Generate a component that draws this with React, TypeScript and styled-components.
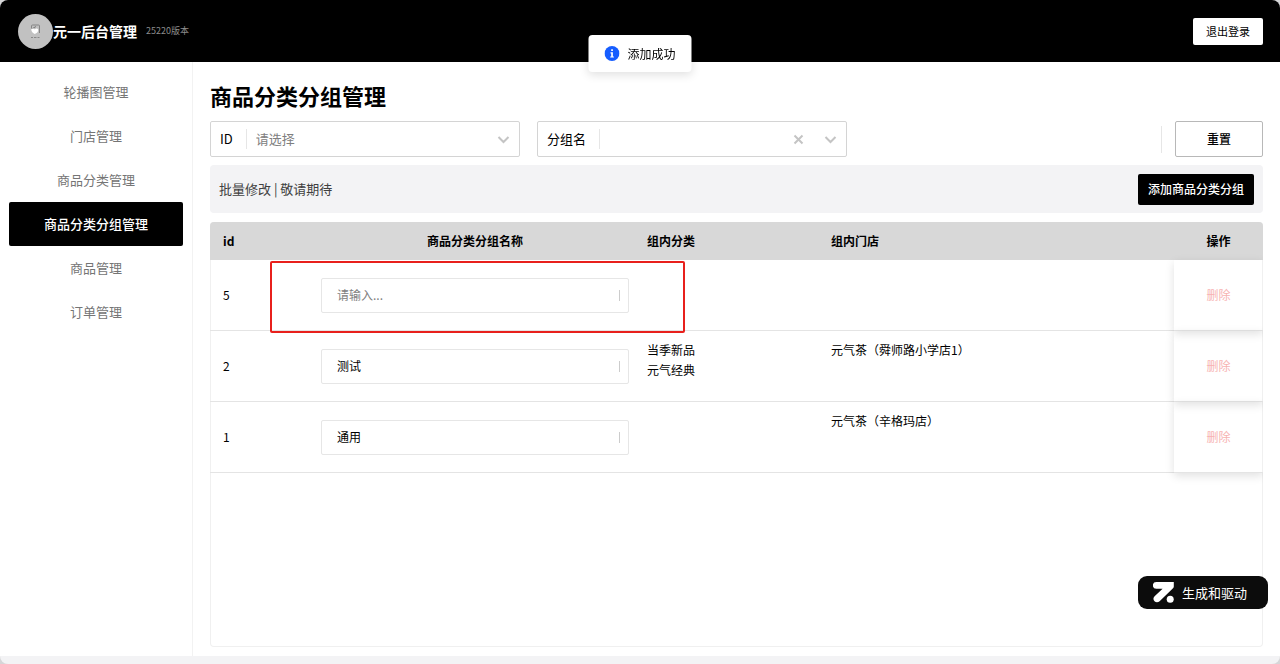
import React from "react";
import styled, { createGlobalStyle } from "styled-components";

const GlobalStyle = createGlobalStyle`
  *, *::before, *::after { box-sizing: border-box; }
  body {
    margin: 0;
    background: #d6d6d8;
    color: #000;
    font-family: "Noto Sans CJK SC", "Noto Sans", sans-serif;
    font-size: 12px;
    line-height: 20px;
  }
  button, input, select { font: inherit; color: inherit; }
  button { cursor: pointer; }
`;

const Frame = styled.div`
  display: flex;
  flex-direction: column;
  min-height: 100vh;
  padding-bottom: 8px;
  border-radius: 8px;
  overflow: hidden;
  background: #f3f3f5;
`;

const TopBar = styled.header`
  display: flex;
  align-items: center;
  height: 62px;
  padding: 0 17px 0 18px;
  background: #000;
  color: #fff;
`;

const Avatar = styled.svg`
  width: 35px;
  height: 35px;
`;

const Brand = styled.strong`
  font-size: 14px;
  font-weight: 700;
`;

const Version = styled.span`
  margin-left: 9px;
  font-size: 9px;
  color: #8c8c8c;
`;

const LogoutButton = styled.button`
  height: 27px;
  margin-left: auto;
  padding: 0 13px;
  border: 0;
  border-radius: 2px;
  background: #fff;
  color: #000;
  font-size: 11px;
`;

const Body = styled.div`
  display: flex;
  flex: 1;
  background: #fff;
`;

const Sidebar = styled.nav`
  flex: 0 0 193px;
  padding: 8px 9px;
  border-right: 1px solid #f2f2f2;
`;

const NavItem = styled.a<{ $active?: boolean }>`
  display: flex;
  align-items: center;
  justify-content: center;
  height: 44px;
  border-radius: 2px;
  background: ${(p) => (p.$active ? "#000" : "transparent")};
  color: ${(p) => (p.$active ? "#fff" : "#757575")};
  font-size: 13px;
  font-weight: ${(p) => (p.$active ? 500 : 400)};
  text-decoration: none;
`;

const Main = styled.main`
  display: flex;
  flex-direction: column;
  flex: 1;
  min-width: 0;
  padding: 17px 17px 9px;
`;

const Title = styled.h1`
  margin: 0 0 10px;
  font-size: 22px;
  line-height: 32px;
  font-weight: 700;
`;

const FilterRow = styled.div`
  display: flex;
  align-items: center;
  gap: 17px;
`;

const Field = styled.div`
  display: flex;
  align-items: center;
  flex: 0 1 310px;
  height: 36px;
  padding: 0 9px;
  border: 1px solid #d4d4d4;
  border-radius: 2px;
  font-size: 13px;
`;

const FieldLabel = styled.label`
  padding-right: 13px;
  border-right: 1px solid #e6e6e6;
  white-space: nowrap;
`;

const FieldSelect = styled.select`
  flex: 1;
  min-width: 0;
  padding: 0 9px;
  border: 0;
  outline: 0;
  appearance: none;
  background: transparent;
  color: #808080;
`;

const ClearButton = styled.button`
  display: flex;
  margin-right: 19px;
  padding: 0;
  border: 0;
  background: transparent;
`;

const Glyph = styled.svg`
  width: 13px;
  height: 13px;
  fill: none;
  stroke: #c4c4c4;
  stroke-width: 2;
`;

const ResetGroup = styled.div`
  display: flex;
  align-items: center;
  gap: 13px;
  margin-left: auto;
`;

const Divider = styled.span`
  width: 1px;
  height: 27px;
  background: #e6e6e6;
`;

const ResetButton = styled.button`
  width: 88px;
  height: 36px;
  border: 1px solid #b8b8b8;
  border-radius: 2px;
  background: #fff;
  font-weight: 500;
`;

const BatchBar = styled.div`
  display: flex;
  align-items: center;
  justify-content: space-between;
  height: 48px;
  margin: 8px 0 9px;
  padding: 0 9px;
  border-radius: 4px;
  background: #f3f3f5;
  color: #404040;
  font-size: 13px;
`;

const AddButton = styled.button`
  height: 31px;
  padding: 0 10px;
  border: 0;
  border-radius: 2px;
  background: #000;
  color: #fff;
  font-size: 12px;
  font-weight: 500;
`;

const Panel = styled.section`
  flex: 1;
  border-radius: 4px;
  box-shadow: inset 0 0 0 1px #f0f0f0;
  overflow: hidden;
`;

const Table = styled.table`
  width: 100%;
  table-layout: fixed;
  border-collapse: separate;
  border-spacing: 0;
`;

const Col = styled.col<{ $width?: number }>`
  width: ${(p) => (p.$width ? p.$width + "px" : "auto")};
`;

const HeadCell = styled.th<{ $center?: boolean }>`
  height: 38px;
  padding: 0 13px;
  background: #d8d8d8;
  font-weight: 700;
  text-align: ${(p) => (p.$center ? "center" : "left")};
`;

const Cell = styled.td<{ $top?: boolean }>`
  position: relative;
  height: 71px;
  padding: 9px 13px;
  border-bottom: 1px solid #e4e4e4;
  vertical-align: ${(p) => (p.$top ? "top" : "middle")};
`;

const NameCell = styled(Cell)`
  padding: 0 5px;
`;

const ActionCell = styled(Cell)`
  text-align: center;
  box-shadow: 0 3px 9px rgba(0, 0, 0, 0.12);
`;

const NameBox = styled.div`
  display: flex;
  align-items: center;
  height: 35px;
  padding: 0 8px 0 15px;
  border: 1px solid #e6e6e6;
  border-radius: 2px;

  &::after {
    content: "";
    width: 1px;
    height: 11px;
    background: #ccc;
  }
`;

const NameInput = styled.input`
  flex: 1;
  min-width: 0;
  padding: 0;
  border: 0;
  outline: 0;
  background: transparent;

  &::placeholder {
    color: #808080;
  }
`;

const Marker = styled.div`
  position: absolute;
  z-index: 1;
  top: 1px;
  right: -51px;
  bottom: -3px;
  left: -46px;
  border: 2px solid #e8201c;
  border-radius: 2px;
  pointer-events: none;
`;

const DeleteButton = styled.button`
  padding: 0;
  border: 0;
  background: transparent;
  color: #f7b2b2;
`;

const Toast = styled.div`
  position: fixed;
  z-index: 2;
  top: 35px;
  left: 50%;
  display: flex;
  align-items: center;
  gap: 8px;
  height: 37px;
  padding: 0 16px;
  border-radius: 4px;
  background: #fff;
  box-shadow: 0 3px 10px rgba(0, 0, 0, 0.12);
  transform: translateX(-50%);
`;

const InfoIcon = styled.svg`
  width: 15px;
  height: 15px;
`;

const DriveButton = styled.button`
  position: fixed;
  z-index: 2;
  right: 12px;
  bottom: 55px;
  display: flex;
  align-items: center;
  gap: 8px;
  width: 130px;
  height: 33px;
  padding: 0 15px;
  border: 0;
  border-radius: 9px;
  background: #0c0c0c;
  color: #fff;
  font-size: 13px;
  white-space: nowrap;
`;

const DriveLogo = styled.svg`
  flex: none;
  width: 21px;
  height: 21px;
  fill: #fff;
`;

const navItems = [
  "轮播图管理",
  "门店管理",
  "商品分类管理",
  "商品分类分组管理",
  "商品管理",
  "订单管理",
];
const activeItem = "商品分类分组管理";

interface Group {
  id: number;
  name: string;
  categories: string[];
  stores: string[];
  marked?: boolean;
}

const groups: Group[] = [
  { id: 5, name: "", categories: [], stores: [], marked: true },
  { id: 2, name: "测试", categories: ["当季新品", "元气经典"], stores: ["元气茶（舜师路小学店1）"] },
  { id: 1, name: "通用", categories: [], stores: ["元气茶（辛格玛店）"] },
];

const Chevron = () => (
  <Glyph viewBox="0 0 13 13" aria-hidden="true">
    <path d="M1.5 4 6.5 9l5-5" />
  </Glyph>
);

export default function App() {
  return (
    <>
      <GlobalStyle />
      <Frame>
        <TopBar>
          <Avatar viewBox="0 0 35 35" aria-hidden="true">
            <circle cx="17.5" cy="17.5" r="17.5" fill="#c1c1c1" />
            <path d="M13.5 14.5V12a1 1 0 0 1 1-1h6a1 1 0 0 1 1 1v7" fill="none" stroke="#858585" />
            <path d="M14.5 14.5 18 12.5" stroke="#777" />
            <path d="M13.2 15.2c1.6-1 2.8-.8 3.6.2 1-1.4 3.2-1 3.4.6.2 1.8-1.6 3.4-3.4 4-1.8-.6-3.6-2.6-3.6-4.8z" fill="#fff" />
            <path d="M13 23.500h2m1 0h2.500m1 0h2" stroke="#888" />
          </Avatar>
          <Brand>元一后台管理</Brand>
          <Version>25220版本</Version>
          <LogoutButton type="button">退出登录</LogoutButton>
        </TopBar>
        <Body>
          <Sidebar>
            {navItems.map((item) => (
              <NavItem
                key={item}
                href="#"
                $active={item === activeItem}
                aria-current={item === activeItem ? "page" : undefined}
              >
                {item}
              </NavItem>
            ))}
          </Sidebar>
          <Main>
            <Title>商品分类分组管理</Title>
            <FilterRow>
              <Field>
                <FieldLabel htmlFor="filter-id">ID</FieldLabel>
                <FieldSelect id="filter-id" defaultValue="">
                  <option value="">请选择</option>
                  {groups.map((g) => (
                    <option key={g.id}>{g.id}</option>
                  ))}
                </FieldSelect>
                <Chevron />
              </Field>
              <Field>
                <FieldLabel htmlFor="filter-name">分组名</FieldLabel>
                <FieldSelect id="filter-name" defaultValue="">
                  <option value="" />
                  <option>测试</option>
                  <option>通用</option>
                </FieldSelect>
                <ClearButton type="button" aria-label="清除">
                  <Glyph viewBox="0 0 13 13" aria-hidden="true">
                    <path d="m2.500 2.500 8 8m0-8-8 8" />
                  </Glyph>
                </ClearButton>
                <Chevron />
              </Field>
              <ResetGroup>
                <Divider />
                <ResetButton type="button">重置</ResetButton>
              </ResetGroup>
            </FilterRow>
            <BatchBar>
              <span>批量修改 | 敬请期待</span>
              <AddButton type="button">添加商品分类分组</AddButton>
            </BatchBar>
            <Panel>
              <Table>
                <colgroup>
                  <Col $width={106} />
                  <Col $width={318} />
                  <Col $width={184} />
                  <Col />
                  <Col $width={89} />
                </colgroup>
                <thead>
                  <tr>
                    <HeadCell>id</HeadCell>
                    <HeadCell $center>商品分类分组名称</HeadCell>
                    <HeadCell>组内分类</HeadCell>
                    <HeadCell>组内门店</HeadCell>
                    <HeadCell $center>操作</HeadCell>
                  </tr>
                </thead>
                <tbody>
                  {groups.map((g) => (
                    <tr key={g.id}>
                      <Cell>{g.id}</Cell>
                      <NameCell>
                        <NameBox>
                          <NameInput
                            aria-label="商品分类分组名称"
                            placeholder="请输入..."
                            defaultValue={g.name}
                          />
                        </NameBox>
                        {g.marked && <Marker />}
                      </NameCell>
                      <Cell $top>
                        {g.categories.map((c) => (
                          <div key={c}>{c}</div>
                        ))}
                      </Cell>
                      <Cell $top>
                        {g.stores.map((s) => (
                          <div key={s}>{s}</div>
                        ))}
                      </Cell>
                      <ActionCell>
                        <DeleteButton type="button">删除</DeleteButton>
                      </ActionCell>
                    </tr>
                  ))}
                </tbody>
              </Table>
            </Panel>
          </Main>
        </Body>
      </Frame>
      <Toast role="status">
        <InfoIcon viewBox="0 0 15 15" aria-hidden="true">
          <circle cx="7.5" cy="7.5" r="7.5" fill="#165dff" />
          <path d="M6.7 3.3h1.7v1.6H6.7zM6 6.2h2.4v4.2h1v1.2H5.7v-1.2h1V7.4H6z" fill="#fff" />
        </InfoIcon>
        <span>添加成功</span>
      </Toast>
      <DriveButton type="button">
        <DriveLogo viewBox="0 0 21 21" aria-hidden="true">
          <path d="M3.300 0H20.800V4.400c0 .7-.3 1.300-.8 1.800L6.600 19.200c-1.500 1.400-3.700 1.400-5.100.1-1.500-1.500-1.400-3.700.1-5.100L9.600 6.800H3.300A3.400 3.400 0 0 1 3.300 0z" />
          <circle cx="17.200" cy="17.200" r="3.500" />
        </DriveLogo>
        生成和驱动
      </DriveButton>
    </>
  );
}
